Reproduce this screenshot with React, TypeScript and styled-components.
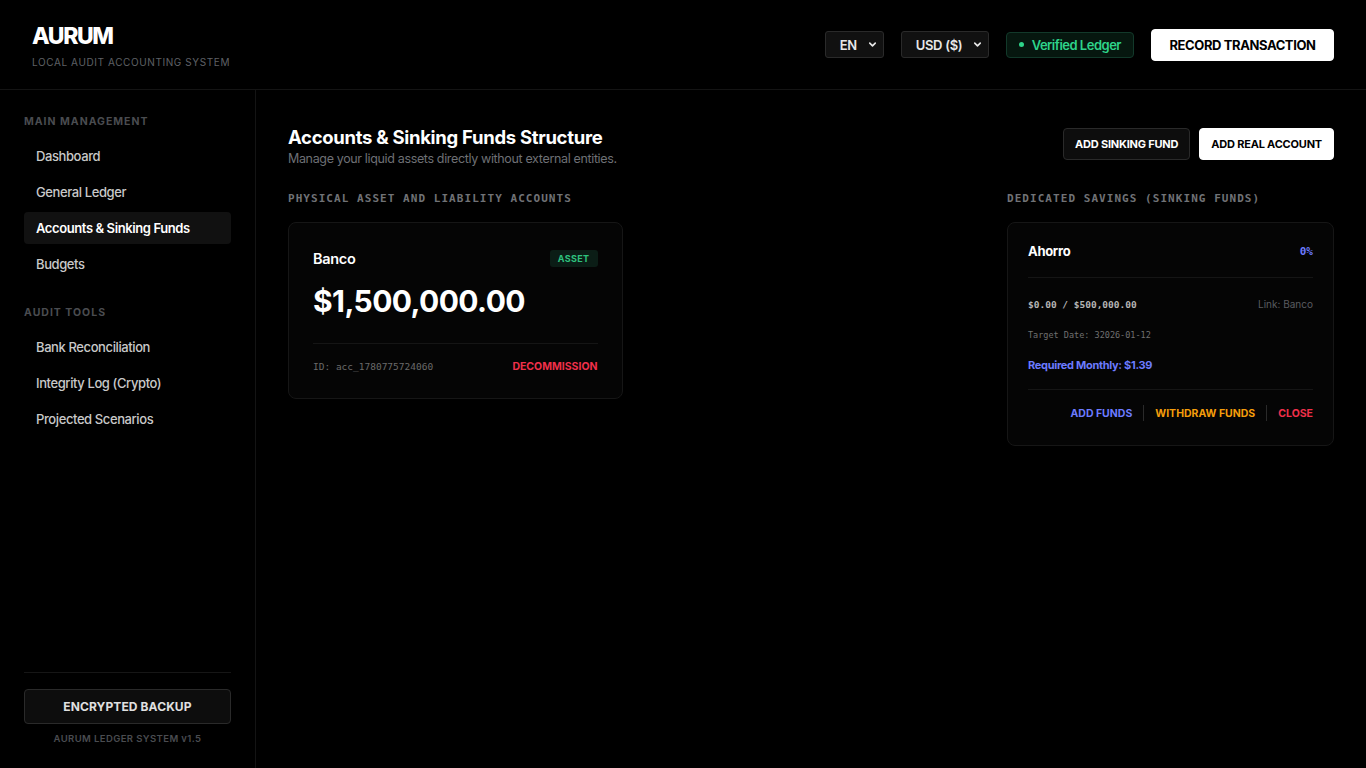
import React from "react";
import styled, { createGlobalStyle } from "styled-components";

const GlobalStyle = createGlobalStyle`
  html, body {
    margin: 0;
    padding: 0;
    background: #000;
    color: #e5e5e5;
    font-family: Inter, "Noto Sans", sans-serif;
  }
  * { box-sizing: border-box; }
`;

const mono = `"DejaVu Sans Mono", "Liberation Mono", monospace`;

const Shell = styled.div`
  width: 1366px;
  height: 768px;
  display: flex;
  flex-direction: column;
  background: #000;
  overflow: hidden;
`;

const TopBar = styled.header`
  height: 90px;
  flex-shrink: 0;
  display: flex;
  align-items: center;
  justify-content: space-between;
  padding: 0 32px;
  border-bottom: 1px solid #141414;
`;

const Brand = styled.div`
  display: flex;
  flex-direction: column;
  gap: 7px;
  padding-top: 4px;
`;

const Logo = styled.div`
  font-size: 23px;
  font-weight: 800;
  letter-spacing: -1.4px;
  color: #fff;
  line-height: 24px;
`;

const Tagline = styled.div`
  font-size: 10px;
  letter-spacing: 0.6px;
  color: #5f6166;
  line-height: 14px;
`;

const TopActions = styled.div`
  display: flex;
  align-items: center;
  gap: 17px;
`;

const Select = styled.div<{ $w: number }>`
  width: ${(p) => p.$w}px;
  height: 27px;
  border: 1px solid #2a2a2a;
  border-radius: 3px;
  background: #111;
  display: flex;
  align-items: center;
  justify-content: space-between;
  padding: 0 5px 0 14px;
  font-size: 13px;
  font-weight: 600;
  letter-spacing: -0.3px;
  color: #e8e8e8;
`;

const Verified = styled.div`
  height: 26px;
  padding: 0 12px;
  display: flex;
  align-items: center;
  gap: 8px;
  border: 1px solid #12392a;
  background: #06170f;
  border-radius: 4px;
  color: #2ed48a;
  font-size: 13px;
  font-weight: 600;
  letter-spacing: -0.5px;
`;

const Dot = styled.span`
  width: 5px;
  height: 5px;
  border-radius: 50%;
  background: #2ed48a;
`;

const Button = styled.button<{ $primary?: boolean; $h?: number }>`
  height: ${(p) => p.$h ?? 32}px;
  padding: 0 16px;
  border-radius: 4px;
  font-family: inherit;
  font-weight: 700;
  white-space: nowrap;
  cursor: pointer;
  border: 1px solid ${(p) => (p.$primary ? "#fff" : "#2a2a2a")};
  background: ${(p) => (p.$primary ? "#fff" : "#0d0d0d")};
  color: ${(p) => (p.$primary ? "#000" : "#fff")};
`;

const RecordButton = styled(Button)`
  font-size: 13px;
  letter-spacing: -0.4px;
  width: 183px;
  padding: 0;
`;

const Body = styled.div`
  flex: 1;
  display: flex;
  min-height: 0;
`;

const Sidebar = styled.aside`
  width: 256px;
  flex-shrink: 0;
  border-right: 1px solid #141414;
  padding: 25px 24px 24px;
  display: flex;
  flex-direction: column;
`;

const NavGroup = styled.div`
  display: flex;
  flex-direction: column;
  gap: 4px;
  margin-bottom: 26px;
`;

const GroupLabel = styled.div`
  font-size: 10.5px;
  font-weight: 700;
  letter-spacing: 1px;
  color: #4a4c50;
  margin-bottom: 11px;
  line-height: 14px;
`;

const NavItem = styled.div<{ $active?: boolean }>`
  height: 32px;
  display: flex;
  align-items: center;
  padding-left: 12px;
  border-radius: 4px;
  font-size: 13px;
  font-weight: ${(p) => (p.$active ? 600 : 500)};
  letter-spacing: -0.4px;
  color: ${(p) => (p.$active ? "#fff" : "#c9c9c9")};
  background: ${(p) => (p.$active ? "#111" : "transparent")};
`;

const SidebarFoot = styled.div`
  margin-top: auto;
  border-top: 1px solid #161616;
  padding-top: 16px;
  display: flex;
  flex-direction: column;
  align-items: center;
  gap: 9px;
`;

const BackupButton = styled(Button)`
  width: 100%;
  height: 35px;
  font-size: 12px;
  letter-spacing: 0.1px;
  color: #e0e0e0;
`;

const Version = styled.div`
  font-size: 9.5px;
  color: #4a4c50;
  letter-spacing: 0.4px;
  font-weight: 600;
`;

const Main = styled.main`
  flex: 1;
  padding: 35px 32px 32px;
  display: flex;
  flex-direction: column;
`;

const PageHead = styled.div`
  display: flex;
  justify-content: space-between;
  align-items: flex-start;
  margin-bottom: 26px;
`;

const TitleBlock = styled.div`
  display: flex;
  flex-direction: column;
  gap: 2px;
`;

const Title = styled.h1`
  margin: 0;
  font-size: 18.5px;
  font-weight: 700;
  letter-spacing: -0.3px;
  color: #fff;
  line-height: 24px;
`;

const Subtitle = styled.p`
  margin: 0;
  font-size: 12.5px;
  color: #6e7075;
  letter-spacing: -0.35px;
`;

const HeadButtons = styled.div`
  display: flex;
  gap: 9px;
  padding-top: 3px;
`;

const SmallButton = styled(Button)`
  font-size: 11px;
  padding: 0 11px;
  letter-spacing: -0.2px;
`;

const Columns = styled.div`
  display: grid;
  grid-template-columns: 1fr 327px;
  gap: 32px;
  align-items: start;
`;

const Column = styled.section`
  display: flex;
  flex-direction: column;
  gap: 16px;
`;

const SectionLabel = styled.h2`
  margin: 0;
  font-family: ${mono};
  font-size: 11px;
  font-weight: 700;
  letter-spacing: 1.05px;
  color: #707276;
  line-height: 14px;
`;

const CardGrid = styled.div`
  display: grid;
  grid-template-columns: repeat(2, 1fr);
  gap: 18px;
`;

const Card = styled.div<{ $pad: string }>`
  background: #050505;
  border: 1px solid #161616;
  border-radius: 8px;
  padding: ${(p) => p.$pad};
`;

const Row = styled.div`
  display: flex;
  justify-content: space-between;
  align-items: center;
`;

const AccountName = styled.div`
  font-size: 14.5px;
  font-weight: 600;
  color: #fff;
  letter-spacing: -0.3px;
`;

const Badge = styled.span`
  background: #0b1d16;
  color: #2ec27e;
  font-size: 9px;
  font-weight: 700;
  letter-spacing: 0.4px;
  padding: 3px 8px;
  border-radius: 3px;
`;

const Balance = styled.div`
  font-size: 30px;
  font-weight: 700;
  color: #fff;
  letter-spacing: -0.6px;
  margin: 16px 0 24px;
  line-height: 36px;
`;

const Divider = styled.div<{ $mb: number }>`
  height: 1px;
  background: #151515;
  margin-bottom: ${(p) => p.$mb}px;
`;

const MonoText = styled.span<{ $size: number; $color: string; $bold?: boolean; $mt?: number }>`
  font-family: ${mono};
  font-size: ${(p) => p.$size}px;
  color: ${(p) => p.$color};
  font-weight: ${(p) => (p.$bold ? 700 : 400)};
  margin-top: ${(p) => p.$mt ?? 0}px;
`;

const TextAction = styled.span<{ $color: string }>`
  font-size: 10.5px;
  font-weight: 700;
  color: ${(p) => p.$color};
  letter-spacing: 0;
`;

const FundName = styled.div`
  font-size: 13px;
  font-weight: 700;
  color: #fff;
  letter-spacing: -0.3px;
`;

const FundMeta = styled.div`
  display: flex;
  flex-direction: column;
  padding: 18px 0 17px;
`;

const LinkNote = styled.span`
  font-size: 10px;
  color: #5a5c60;
`;

const Required = styled.div`
  font-size: 11px;
  font-weight: 700;
  color: #6c7bff;
  letter-spacing: -0.3px;
  margin-top: 18px;
`;

const Actions = styled.div`
  display: flex;
  justify-content: flex-end;
  align-items: center;
  gap: 11px;
`;

const Sep = styled.span`
  width: 1px;
  height: 16px;
  background: #2a2a2a;
`;

const Chevron = () => (
  <svg width="11" height="11" viewBox="0 0 24 24" fill="none" stroke="#e8e8e8" strokeWidth="3.5" strokeLinecap="round" strokeLinejoin="round">
    <path d="M6 9l6 6 6-6" />
  </svg>
);

const mainNav = ["Dashboard", "General Ledger", "Accounts & Sinking Funds", "Budgets"];
const auditNav = ["Bank Reconciliation", "Integrity Log (Crypto)", "Projected Scenarios"];

export default function App() {
  return (
    <Shell>
      <GlobalStyle />
      <TopBar>
        <Brand>
          <Logo>AURUM</Logo>
          <Tagline>LOCAL AUDIT ACCOUNTING SYSTEM</Tagline>
        </Brand>
        <TopActions>
          <Select $w={59}>
            EN <Chevron />
          </Select>
          <Select $w={88}>
            USD ($) <Chevron />
          </Select>
          <Verified>
            <Dot />
            Verified Ledger
          </Verified>
          <RecordButton $primary $h={32}>RECORD TRANSACTION</RecordButton>
        </TopActions>
      </TopBar>
      <Body>
        <Sidebar>
          <GroupLabel>MAIN MANAGEMENT</GroupLabel>
          <NavGroup>
            {mainNav.map((n) => (
              <NavItem key={n} $active={n === "Accounts & Sinking Funds"}>
                {n}
              </NavItem>
            ))}
          </NavGroup>
          <GroupLabel>AUDIT TOOLS</GroupLabel>
          <NavGroup>
            {auditNav.map((n) => (
              <NavItem key={n}>{n}</NavItem>
            ))}
          </NavGroup>
          <SidebarFoot>
            <BackupButton>ENCRYPTED BACKUP</BackupButton>
            <Version>AURUM LEDGER SYSTEM v1.5</Version>
          </SidebarFoot>
        </Sidebar>
        <Main>
          <PageHead>
            <TitleBlock>
              <Title>Accounts &amp; Sinking Funds Structure</Title>
              <Subtitle>Manage your liquid assets directly without external entities.</Subtitle>
            </TitleBlock>
            <HeadButtons>
              <SmallButton>ADD SINKING FUND</SmallButton>
              <SmallButton $primary>ADD REAL ACCOUNT</SmallButton>
            </HeadButtons>
          </PageHead>
          <Columns>
            <Column>
              <SectionLabel>PHYSICAL ASSET AND LIABILITY ACCOUNTS</SectionLabel>
              <CardGrid>
                <Card $pad="27px 24px 25px">
                  <Row>
                    <AccountName>Banco</AccountName>
                    <Badge>ASSET</Badge>
                  </Row>
                  <Balance>$1,500,000.00</Balance>
                  <Divider $mb={16} />
                  <Row>
                    <MonoText $size={9.5} $color="#6a6a6a">ID: acc_1780775724060</MonoText>
                    <TextAction $color="#f0304a">DECOMMISSION</TextAction>
                  </Row>
                </Card>
              </CardGrid>
            </Column>
            <Column>
              <SectionLabel>DEDICATED SAVINGS (SINKING FUNDS)</SectionLabel>
              <Card $pad="20px 20px 24px">
                <Row>
                  <FundName>Ahorro</FundName>
                  <MonoText $size={11} $color="#6c7bff" $bold>0%</MonoText>
                </Row>
                <FundMeta>
                  <Divider $mb={20} />
                  <Row>
                    <MonoText $size={9.5} $color="#b5b5b5" $bold>$0.00 / $500,000.00</MonoText>
                    <LinkNote>Link: Banco</LinkNote>
                  </Row>
                  <MonoText $size={8.5} $color="#707070" $mt={20}>
                    Target Date: 32026-01-12
                  </MonoText>
                  <Required>Required Monthly: $1.39</Required>
                </FundMeta>
                <Divider $mb={15} />
                <Actions>
                  <TextAction $color="#6c7bff">ADD FUNDS</TextAction>
                  <Sep />
                  <TextAction $color="#f59e0b">WITHDRAW FUNDS</TextAction>
                  <Sep />
                  <TextAction $color="#f0304a">CLOSE</TextAction>
                </Actions>
              </Card>
            </Column>
          </Columns>
        </Main>
      </Body>
    </Shell>
  );
}
